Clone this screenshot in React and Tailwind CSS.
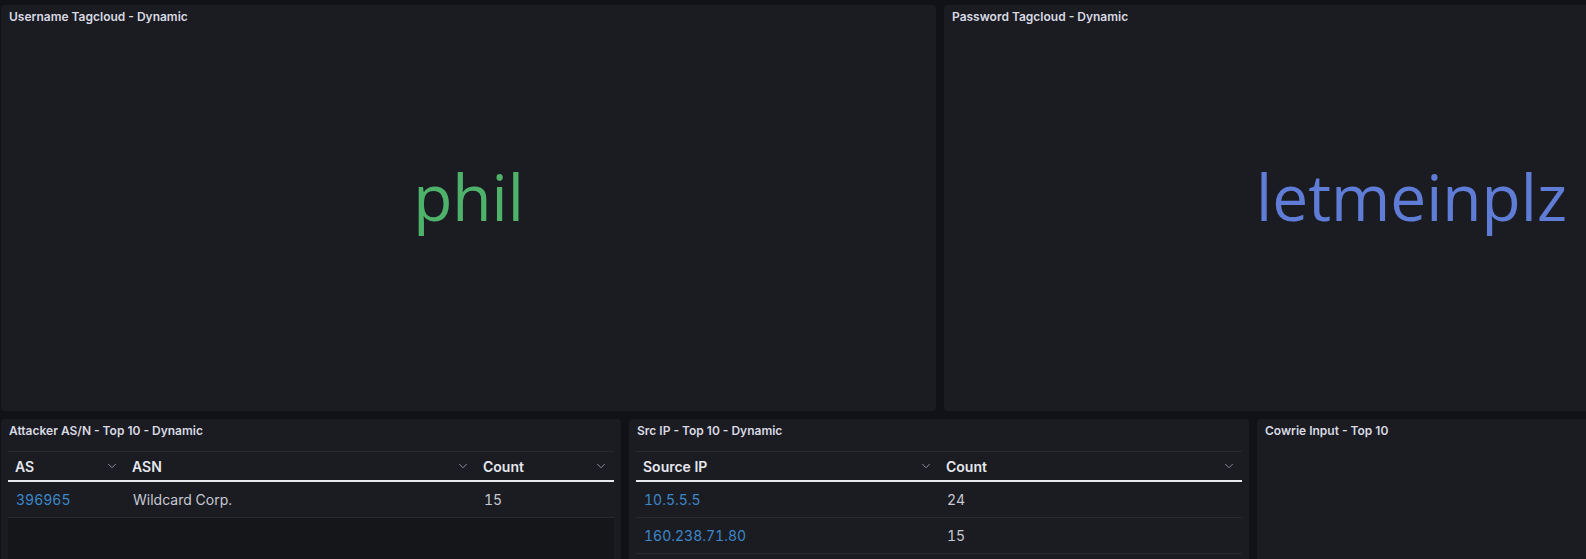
import React from 'react';
import { ChevronDown } from 'lucide-react';

const FONT = { fontFamily: 'Inter, "Noto Sans", sans-serif' };

function Panel({ title, className = '', children }) {
  return (
    <div className={`shrink-0 flex flex-col rounded-[4px] bg-[#1b1c21] overflow-hidden ${className}`}>
      <div className="h-6 shrink-0 flex items-center px-2 text-[12px] font-semibold text-[#d8d9e3]">{title}</div>
      {children}
    </div>
  );
}

function TagCloud({ word, color }) {
  return (
    <div className="flex-1 flex items-center justify-center pb-[46px]">
      <span
        className={`text-[64px] leading-none ${color}`}
        style={{ fontFamily: '"Open Sans", "Noto Sans", sans-serif' }}
      >
        {word}
      </span>
    </div>
  );
}

function Table({ cols, rows, fill }) {
  return (
    <div className="mx-[7px] mt-2 flex-1 flex flex-col">
      <div className="flex h-[31px] border-t border-[#2a2b31] border-b-2 border-b-[#e8e8ee]">
        {cols.map((c) => (
          <div key={c.name} className={`${c.w} shrink-0 flex items-center justify-between pl-[7px] pr-[6px]`}>
            <span className="text-[14px] font-semibold text-[#e6e7ee]">{c.name}</span>
            <ChevronDown className="w-[14px] h-[14px] text-[#9a9ca6]" strokeWidth={1.5} />
          </div>
        ))}
      </div>
      {rows.map((r, i) => (
        <div key={i} className="flex h-[36px] border-b border-[#2a2b31]">
          {r.map((v, j) => (
            <div
              key={j}
              className={`${cols[j].w} shrink-0 flex items-center pl-2 text-[14px] tabular-nums ${j === 0 ? 'text-[#3b87cb]' : 'text-[#c7c8d2]'}`}
            >
              {v}
            </div>
          ))}
        </div>
      ))}
      {fill && <div className="flex-1 bg-[#151619]" />}
    </div>
  );
}

export default function App() {
  return (
    <div className="w-[1586px] h-[559px] overflow-hidden bg-[#111217] pt-[5px] pl-px" style={FONT}>
      <div className="flex gap-2 h-[406px]">
        <Panel title="Username Tagcloud - Dynamic" className="w-[935px]">
          <TagCloud word="phil" color="text-[#4fb26a]" />
        </Panel>
        <Panel title="Password Tagcloud - Dynamic" className="w-[935px]">
          <TagCloud word="letmeinplz" color="text-[#5f7dd6]" />
        </Panel>
      </div>
      <div className="flex gap-2 h-[200px] mt-2">
        <Panel title="Attacker AS/N - Top 10 - Dynamic" className="w-[620px]">
          <Table
            cols={[
              { name: 'AS', w: 'w-[117px]' },
              { name: 'ASN', w: 'w-[351px]' },
              { name: 'Count', w: 'w-[138px]' },
            ]}
            rows={[['396965', 'Wildcard Corp.', '15']]}
            fill
          />
        </Panel>
        <Panel title="Src IP - Top 10 - Dynamic" className="w-[620px]">
          <Table
            cols={[
              { name: 'Source IP', w: 'w-[303px]' },
              { name: 'Count', w: 'w-[303px]' },
            ]}
            rows={[
              ['10.5.5.5', '24'],
              ['160.238.71.80', '15'],
            ]}
          />
        </Panel>
        <Panel title="Cowrie Input - Top 10" className="w-[620px]" />
      </div>
    </div>
  );
}
